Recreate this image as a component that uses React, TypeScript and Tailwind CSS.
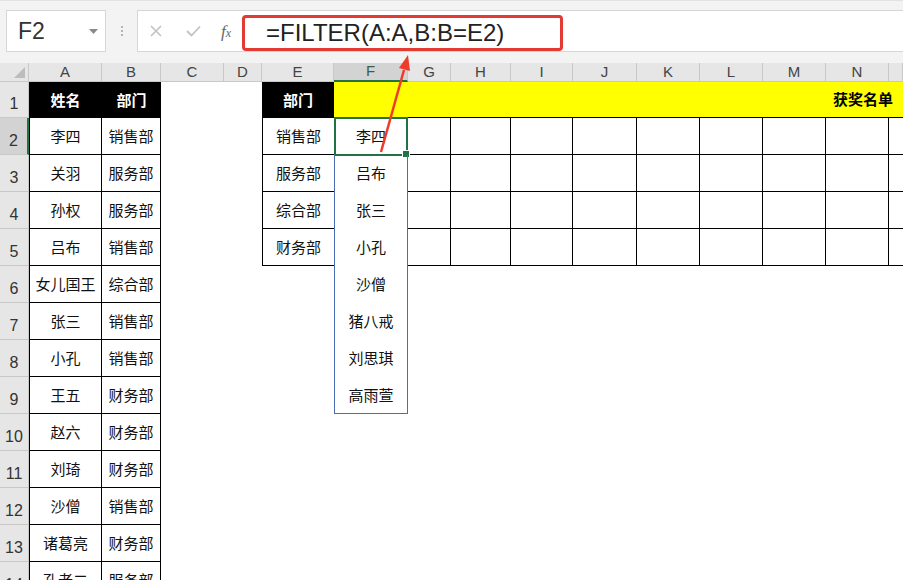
import React from "react";

const colLetters = ["A", "B", "C", "D", "E", "F", "G", "H", "I", "J", "K", "L", "M", "N", ""];

const people: [string, string][] = [
  ["李四", "销售部"],
  ["关羽", "服务部"],
  ["孙权", "服务部"],
  ["吕布", "销售部"],
  ["女儿国王", "综合部"],
  ["张三", "销售部"],
  ["小孔", "销售部"],
  ["王五", "财务部"],
  ["赵六", "财务部"],
  ["刘琦", "财务部"],
  ["沙僧", "销售部"],
  ["诸葛亮", "财务部"],
  ["孔老二", "服务部"],
];

const depts = ["销售部", "服务部", "综合部", "财务部"];
const winners = ["李四", "吕布", "张三", "小孔", "沙僧", "猪八戒", "刘思琪", "高雨萱"];

const cjk = { fontFamily: '"Noto Sans CJK SC", "Noto Sans", sans-serif' };
const latin = { fontFamily: '"Liberation Sans", Arial, sans-serif' };

function FormulaBar() {
  return (
    <div className="h-[63px] bg-[#f3f3f3] border-t border-[#e2e2e2] flex items-start pt-[9px]" style={latin}>
      {/* Name box */}
      <div className="ml-[6px] w-[100px] h-[42px] bg-white border border-[#d6d6d6] flex items-center justify-between pl-[11px] pr-[7px]">
        <span className="text-[23px] text-[#333]">F2</span>
        <svg width="9" height="5" viewBox="0 0 9 5">
          <path d="M0 0 L9 0 L4.5 5 Z" fill="#8a8a8a" />
        </svg>
      </div>
      <div className="w-[31px] h-[42px] flex flex-col items-center justify-center gap-[2px]">
        <span className="w-[2px] h-[2px] bg-[#b5b5b5]" />
        <span className="w-[2px] h-[2px] bg-[#b5b5b5]" />
        <span className="w-[2px] h-[2px] bg-[#b5b5b5]" />
      </div>
      {/* Formula input */}
      <div className="flex-1 h-[42px] bg-white border border-[#d6d6d6] border-r-0 flex items-start">
        <div className="w-[104px] h-full flex items-center">
          <svg className="ml-[12px]" width="12" height="12" viewBox="0 0 12 12">
            <path d="M1 1 L11 11 M11 1 L1 11" stroke="#c2c2c2" strokeWidth="1.6" />
          </svg>
          <svg className="ml-[24px]" width="15" height="12" viewBox="0 0 15 12">
            <path d="M1 6 L5.5 10.5 L14 1.5" stroke="#c2c2c2" strokeWidth="1.8" fill="none" />
          </svg>
          <span className="ml-[20px] text-[17px] italic text-[#666] leading-none" style={{ fontFamily: '"Liberation Serif", serif' }}>
            f<span className="text-[12px]">x</span>
          </span>
        </div>
        <div className="mt-[4px] w-[321px] h-[36px] border-[3px] border-[#e33a33] rounded-[4px] flex items-center pl-[21px]">
          <span className="text-[24px] text-[#222] leading-none">=FILTER(A:A,B:B=E2)</span>
        </div>
      </div>
    </div>
  );
}

function ColumnHeaders() {
  return (
    <>
      <div className="bg-[#e6e6e6] border-r border-b border-[#c8c8c8] flex items-end justify-end pr-[3px] pb-[3px]">
        <svg width="11" height="11" viewBox="0 0 11 11">
          <path d="M11 0 L11 11 L0 11 Z" fill="#bdbdbd" />
        </svg>
      </div>
      {colLetters.map((c, i) =>
        c === "F" ? (
          <div
            key={i}
            className="bg-[#d3d3d3] border-r border-[#c8c8c8] border-b-2 border-b-[#217346] flex items-center justify-center text-[15px] text-[#3b5f45]"
            style={latin}
          >
            {c}
          </div>
        ) : (
          <div
            key={i}
            className="bg-[#e6e6e6] border-r border-b border-[#c8c8c8] flex items-center justify-center text-[15px] text-[#444]"
            style={latin}
          >
            {c}
          </div>
        )
      )}
    </>
  );
}

function RowHeader({ n }: { n: number }) {
  if (n === 2) {
    return (
      <div className="bg-[#d3d3d3] border-b border-[#c8c8c8] border-r-2 border-r-[#217346] flex items-end justify-center pb-[1px] text-[16px] text-[#333]" style={latin}>
        {n}
      </div>
    );
  }
  return (
    <div className="bg-[#e6e6e6] border-b border-r border-[#c8c8c8] flex items-end justify-center pb-[1px] text-[16px] text-[#333]" style={latin}>
      {n}
    </div>
  );
}

function Row({ n }: { n: number }) {
  const p = people[n - 2];
  const inDept = n >= 2 && n <= 5;
  const inSpill = n >= 2 && n <= 9;
  return (
    <>
      <RowHeader n={n} />
      {/* A, B */}
      <div className="border-l border-r border-b border-black flex items-center justify-center text-[15px] text-[#111]" style={cjk}>
        {p[0]}
      </div>
      <div className="border-r border-b border-black flex items-center justify-center text-[15px] text-[#111]" style={cjk}>
        {p[1]}
      </div>
      {/* C, D */}
      <div />
      <div />
      {/* E */}
      {inDept ? (
        <div className="border-l border-b border-black flex items-center justify-center text-[15px] text-[#111]" style={cjk}>
          {depts[n - 2]}
        </div>
      ) : (
        <div />
      )}
      {/* F: spill range */}
      {inSpill ? (
        <div
          className={
            "relative border-l border-r border-[#4a6db3] flex items-center justify-center text-[15px] text-[#111] " +
            (n === 9 ? "border-b" : "")
          }
          style={cjk}
        >
          {winners[n - 2]}
          {n === 2 && (
            <div className="absolute -left-[1px] -top-[1px] -right-[1px] -bottom-[1px] border-2 border-[#217346]">
              <div className="absolute -right-[4px] -bottom-[4px] w-[6px] h-[6px] bg-[#217346] border border-white box-content" />
            </div>
          )}
        </div>
      ) : (
        <div />
      )}
      {/* G..N */}
      {["G", "H", "I", "J", "K", "L", "M", "N"].map((c) =>
        inDept ? <div key={c} className="border-r border-b border-black" /> : <div key={c} />
      )}
      {/* O */}
      {inDept ? <div className="border-b border-black" /> : <div />}
    </>
  );
}

export default function App() {
  return (
    <div className="relative w-[903px] h-[580px] overflow-hidden bg-white">
      <FormulaBar />
      <div className="grid grid-cols-[29px_73px_59px_63px_38px_72px_74px_43px_60px_62px_64px_63px_63px_63px_63px_1fr] grid-rows-[19px_36px_repeat(13,37px)]">
        <ColumnHeaders />
        {/* Row 1 */}
        <RowHeader n={1} />
        <div className="bg-black flex items-center justify-center text-[15px] font-bold text-white" style={cjk}>
          姓名
        </div>
        <div className="bg-black flex items-center justify-center text-[15px] font-bold text-white" style={cjk}>
          部门
        </div>
        <div />
        <div />
        <div className="bg-black flex items-center justify-center text-[15px] font-bold text-white" style={cjk}>
          部门
        </div>
        <div className="col-span-10 bg-[#ffff00] border-b border-black flex items-center justify-end pr-[10px] text-[15px] font-bold text-black" style={cjk}>
          获奖名单
        </div>
        {Array.from({ length: 13 }, (_, i) => (
          <Row key={i} n={i + 2} />
        ))}
      </div>

      {/* annotation arrow */}
      <svg className="absolute left-0 top-0 pointer-events-none" width="903" height="580">
        <line x1="381" y1="152" x2="404" y2="70" stroke="#ef3b2c" strokeWidth="2.5" />
        <polygon points="408,55 410,71 399,68" fill="#ef3b2c" />
      </svg>
    </div>
  );
}
